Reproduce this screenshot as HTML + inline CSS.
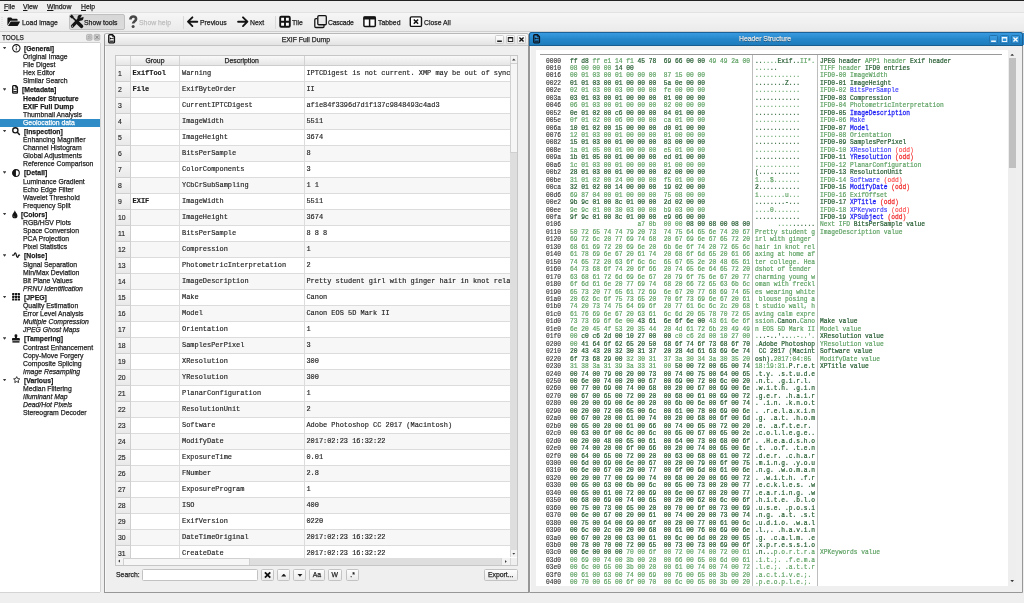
<!DOCTYPE html>
<html><head><meta charset="utf-8"><title>Sherloq</title>
<style>
*{box-sizing:border-box;margin:0;padding:0}
html,body{width:1024px;height:603px;overflow:hidden;background:#efefef;font-family:"Liberation Sans",sans-serif;font-size:7.9px;color:#1a1a1a;-webkit-text-stroke:.25px}
body{position:relative;will-change:transform}
.abs{position:absolute}
#topline{position:absolute;left:0;top:0;width:1024px;height:1px;background:#222}
#menubar{position:absolute;left:0;top:1px;width:1024px;height:11px;background:#efefef}
#menubar span{position:absolute;top:1.2px;line-height:9px;white-space:pre;transform:scaleX(.868);transform-origin:0 50%}
#menubar u{text-decoration-thickness:.55px;text-underline-offset:.7px}
#toolbar{position:absolute;left:0;top:12px;width:1024px;height:19.6px;background:linear-gradient(#f6f6f6,#ebebeb);border-top:1px solid #e2e2e2;border-bottom:1px solid #cfcfcf}
.tb{position:absolute;top:0;height:19px;line-height:19.4px;white-space:pre;transform:scaleX(.868);transform-origin:0 50%}
.tbi{position:absolute}
.tbi svg{display:block;width:100%;height:100%}
#showtools{position:absolute;left:68.6px;top:.9px;width:56.6px;height:15.7px;border:1px solid #c0c0c0;border-radius:2px;background:linear-gradient(#d7d7d7,#dcdcdc)}
.sep{position:absolute;top:3px;width:1px;height:13px;background:#dadada;border-right:0}
.t{display:inline-block;transform:scaleX(.868);transform-origin:0 50%}
.tcn{display:inline-block;transform:scaleX(.868);transform-origin:50% 50%}
/* dock */
#dock{position:absolute;left:0;top:32px;width:101px;height:571px;background:#efefef}
#docktitle{transform:scaleX(.82);transform-origin:0 50%;position:absolute;left:1.5px;top:1.2px;line-height:10px;font-size:7.9px;color:#222}
#tree{position:absolute;left:0;top:11px;width:100.3px;height:549px;background:#fff;box-shadow:0 -1px 0 #cfcfcf,1px 0 0 #d4d4d4,0 1px 0 #d4d4d4;overflow:hidden}
.tic{position:absolute;display:block;overflow:visible}
svg{overflow:visible}
.tg,.tc{position:absolute;left:0;width:100px;white-space:pre}
.tg{height:9.5px;line-height:9.5px;font-weight:bold}
.tc{height:8px;line-height:8px}
.tc span{position:absolute;left:22.6px;top:0;transform:scaleX(.868);transform-origin:0 50%}
.tg .tt{position:absolute;top:0;transform:scaleX(.868);transform-origin:0 50%}
.tg .ti{position:absolute;left:11.6px;top:0.4px;width:8.6px;height:8.6px}
.tg .ti svg{display:block;width:100%;height:100%}
.tg .arr{position:absolute;left:2.7px;top:3.2px;width:3.8px;height:2.4px;background:#3a3a3a;clip-path:polygon(0 0,100% 0,50% 100%)}
.bd{font-weight:bold}.it{font-style:italic}
.sel{background:#308cc6;color:#fff}
/* mdi windows */
.win{position:absolute;top:33px;height:560px;background:#efefef;border:1px solid #979797;border-top-color:#b8b8b8;border-radius:2.5px 2.5px 0 0;box-shadow:inset 1px 0 0 #f8f8f8}
.wt{position:absolute;left:0;top:0;right:0;height:12px;padding-left:13px;padding-right:34px;text-align:center;line-height:11.6px;font-size:7.9px;white-space:pre}
#w1{left:104px;width:425px}
#w1 .wt{background:linear-gradient(#fafafa,#e3e3e3);border-bottom:1px solid #c4c4c4;color:#222;border-radius:2px 2px 0 0}
#w2{left:529px;width:494px;top:32px;height:561px;border-color:#979797}
#w2 .wt{left:-1px;right:-1px;top:-1px;height:14px;line-height:12.600px;padding-left:14px;padding-right:35px;background:linear-gradient(#3a9be0,#2385c8 55%,#1f7cbc);border:1px solid #1b6298;border-bottom-color:#195c8e;color:#e4e4e4;border-radius:2.5px 2.5px 0 0;text-shadow:0 .6px .5px #0f3f63}
.wb{position:absolute;top:1px;width:9px;height:9px;border-radius:1.5px}
#w1 .wb{border:1px solid #cdcdcd;background:linear-gradient(#fefefe,#ececec)}
#w2 .wb{top:2px;border:1px solid #2273ad;background:linear-gradient(#3c9de2,#2b88ca)}
.wb svg{position:absolute;left:-1px;top:-1px;width:9px;height:9px}
.wicon{position:absolute;left:3.1px;top:.1px;width:7.2px;height:9.6px}
#w2 .wicon{top:1.1px}
.wicon svg{display:block;width:100%;height:100%}
/* table */
#tbl{position:absolute;left:10px;top:21px;width:403px;height:511px;background:#fff;border:1px solid #c6c6c6;overflow:hidden}
#thead{position:absolute;left:0;top:0;width:394px;height:10px;background:linear-gradient(#f9f9f9,#e6e6e6);border-bottom:1px solid #cdcdcd}
#thead div{position:absolute;top:0;height:9px;line-height:9.6px;text-align:center;border-right:1px solid #d2d2d2;font-size:7.9px}
.tr{position:absolute;left:0;width:394px;height:16px;border-bottom:1px solid #dcdcdc;background:#fff;font-family:"Liberation Mono",monospace;font-size:6.95px;line-height:15px;white-space:pre;-webkit-text-stroke:.16px;color:#1e1e1e}
.tr.alt{background:#f7f7f7}
.tr div{position:absolute;top:0;height:15px;overflow:hidden}
.rn{left:0;width:15px;background:linear-gradient(#f7f7f7,#e9e9e9);border-right:1px solid #cfcfcf;font-family:"Liberation Sans",sans-serif;font-size:7.9px;padding-left:2.2px;line-height:16.4px!important;height:16px!important;border-bottom:1px solid #cfcfcf}
.c1{left:15px;width:49px;border-right:1px solid #dcdcdc;padding-left:1.6px;font-weight:bold}
.c2{left:64px;width:125px;border-right:1px solid #dcdcdc;padding-left:2px}
.c3{left:189px;width:205px;padding-left:1.4px}
#vsb{position:absolute;left:394px;top:0;width:7px;height:501px;background:#dedede}
#hsb{position:absolute;left:0;top:501.5px;width:401px;height:8px;background:#dedede}
.btn{position:absolute;border:1px solid #c3c3c3;border-radius:1.6px;background:linear-gradient(#fdfdfd,#ebebeb);text-align:center;white-space:pre}
.ar{background:#3c3c3c}
/* hex */
#hex{position:absolute;left:6px;top:17px;width:472px;height:536px;background:#fff;overflow:hidden;font-family:"Liberation Mono",monospace;font-size:7.5px}
#hexhr{position:absolute;left:4px;top:4px;width:462px;height:1px;background:#9a9a9a}
#hexrows{position:absolute;left:0;top:7.5px;width:472px}
.hr{position:relative;height:7.46px;line-height:7.46px;white-space:pre}
.hr>span{position:absolute;top:0;transform:scaleX(.8333);transform-origin:0 0}
.ad{left:10.2px;color:#333;-webkit-text-stroke:.15px #333}
.hx{left:33.8px}.as{left:218.9px}.lb{left:283.8px}
.d{color:#225a2e;-webkit-text-stroke:.22px #225a2e}.l{color:#5fa264;-webkit-text-stroke:.22px #5fa264}
.hr .ul{color:#4848ff;-webkit-text-stroke:.22px #4848ff}.hr .ud{color:#1c1cf4;-webkit-text-stroke:.27px #1c1cf4}
.hr .rl{color:#ff5252;-webkit-text-stroke:.22px #ff5252}.hr .rd{color:#f03030;-webkit-text-stroke:.27px #f03030}
#vl1,#vl2{position:absolute;top:5px;width:1px;height:531px;background:#bdbdbd}
#vl1{left:216px}#vl2{left:281px}
#hvsb{position:absolute;left:478px;top:17px;width:8px;height:536px;background:#eeeeee}
</style></head>
<body>
<div id="topline"></div>
<div id="menubar">
<span style="left:4.1px"><u>F</u>ile</span><span style="left:23.4px"><u>V</u>iew</span><span style="left:47px"><u>W</u>indow</span><span style="left:81px"><u>H</u>elp</span>
</div>
<div id="toolbar">
  <div style="position:absolute;left:3.6px;top:3px;width:2.4px;height:13px;background:repeating-linear-gradient(#f2f2f2 0 1px,#e3e3e3 1px 2px);left:1px"></div>
  <div id="showtools"></div>
  <svg style="position:absolute;left:0;top:-1px;width:470px;height:20px;display:block" viewBox="0 12 470 20">
    <!-- folder-open -->
    <path d="M7.400 18.500a.9.900 0 0 1 .9-.9h2.900l1.200 1.200h4.300a.9.900 0 0 1 .9.900v1.100H10.400L7.400 25.600z" fill="#141414"/>
    <path d="M10.800 21.500h8.800a.4.400 0 0 1 .35.600l-2.200 3.600a.9.900 0 0 1-.75.400H8z" fill="#141414"/>
    <!-- tools -->
    <g stroke="#141414" fill="none">
      <path d="M71.100 15.900l5.600 5.600" stroke-width="1.700"/>
      <path d="M70.700 15.500l2 2" stroke-width="2.800"/>
      <path d="M78.100 22.900l3.400 3.400" stroke-width="3.600" stroke-linecap="round"/>
      <path d="M79.600 18.600l-7.200 7.500" stroke-width="3.100" stroke-linecap="round"/>
    </g>
    <circle cx="80.500" cy="17.700" r="3" fill="#141414"/>
    <path d="M80.300 17.900l2.300-4.200 2.600 2.600z" fill="#d9d9d9"/>
    <circle cx="72.300" cy="26.200" r=".6" fill="#d9d9d9"/>
    <!-- question -->
    <path d="M130.400 19.400c0-2.100 1.400-2.900 2.800-2.900 1.600 0 2.900 1 2.900 2.500 0 2.200-3 2.300-3 4.600" fill="none" stroke="#484848" stroke-width="2.600"/>
    <circle cx="133.100" cy="26.600" r="1.500" fill="#484848"/>
    <!-- arrows -->
    <path d="M192.400 17.300L188 21.700l4.400 4.400M188.400 21.700h8.900" fill="none" stroke="#141414" stroke-width="1.900" stroke-linecap="round" stroke-linejoin="round"/>
    <path d="M243 17.300l4.400 4.400-4.400 4.400M247 21.700h-8.900" fill="none" stroke="#141414" stroke-width="1.900" stroke-linecap="round" stroke-linejoin="round"/>
    <!-- tile -->
    <rect x="280.200" y="16.800" width="9.600" height="9.900" rx=".9" fill="#fff" stroke="#141414" stroke-width="1.900"/>
    <path d="M285 16.700v10.100M280.100 21.750h9.800" stroke="#141414" stroke-width="1.900"/>
    <!-- cascade -->
    <rect x="314.800" y="18.600" width="9.200" height="8.900" rx="1.100" fill="#f4f4f4" stroke="#141414" stroke-width="1.300"/>
    <rect x="317.400" y="15.100" width="9.600" height="9.700" rx="1.100" fill="#fff"/>
    <rect x="317.800" y="15.650" width="8.500" height="9.100" rx="1.100" fill="#ececec" stroke="#141414" stroke-width="1.300"/>
    <!-- tabbed -->
    <rect x="363.900" y="16.900" width="11.400" height="9.500" rx="1" fill="#fff" stroke="#141414" stroke-width="1.500"/>
    <path d="M363.600 18h12" stroke="#141414" stroke-width="3"/>
    <path d="M369.600 17v9.400" stroke="#141414" stroke-width="1.500"/>
    <!-- close all -->
    <rect x="410.300" y="16.900" width="11.200" height="9.500" rx="1.200" fill="#fff" stroke="#141414" stroke-width="1.400"/>
    <path d="M413.800 19.500l4.300 4.300M418.100 19.500l-4.300 4.300" stroke="#141414" stroke-width="1.600"/>
  </svg>
  <!-- load image -->
  <div class="tb" style="left:21.5px">Load image</div>
  <!-- show tools -->
  <div class="tb" style="left:84.2px">Show tools</div>
  <!-- help -->
  <div class="tb" style="left:139px;color:#bdbdbd">Show help</div>
  <div class="sep" style="left:183px"></div>
  <div class="tb" style="left:199.8px">Previous</div>
  <div class="tb" style="left:250px">Next</div>
  <div class="sep" style="left:275px"></div>
  <div class="tb" style="left:292.2px">Tile</div>
  <div class="tb" style="left:328.4px;letter-spacing:-.22px">Cascade</div>
  <div class="tb" style="left:377.8px">Tabbed</div>
  <div class="tb" style="left:424.2px">Close All</div>
</div>

<div id="dock">
  <div id="docktitle">TOOLS</div>
  <svg class="abs" style="left:86px;top:2px;width:15px;height:7px;display:block" viewBox="86 34 15 7"><rect x="86.600" y="34.400" width="5.400" height="5.800" rx="1" fill="#cfcfcf" stroke="#ababab" stroke-width=".8"/><path d="M87.800 39l3-3.400M87.800 37.200l1.600-1.800M89.600 39l1.400-1.600" stroke="#8f8f8f" stroke-width=".7"/><rect x="94.200" y="34.400" width="5.600" height="5.800" rx="1" fill="#cfcfcf" stroke="#ababab" stroke-width=".8"/><path d="M95.400 35.600l3.200 3.400M98.600 35.600l-3.200 3.400" stroke="#7d7d7d" stroke-width=".9"/></svg>
  <div id="tree">
<div class="tg" style="top:0.60px"><span class="arr"></span><span class="tt" style="left:23.8px">[General]</span></div>
<svg class="tic" style="left:11.90px;top:0.50px;width:8.70px;height:8.70px" viewBox="0 0 18 18" preserveAspectRatio="none"><circle cx="9" cy="9" r="7.7" fill="#fff" stroke="#151515" stroke-width="2.1"/><rect x="7.9" y="7.6" width="2.2" height="5.6" fill="#444"/><circle cx="9" cy="5" r="1.35" fill="#444"/></svg>
<div class="tc" style="top:10.10px"><span>Original Image</span></div>
<div class="tc" style="top:18.10px"><span>File Digest</span></div>
<div class="tc" style="top:26.10px"><span>Hex Editor</span></div>
<div class="tc" style="top:34.10px"><span>Similar Search</span></div>
<div class="tg" style="top:42.10px"><span class="arr"></span><span class="tt" style="left:21.9px">[Metadata]</span></div>
<svg class="tic" style="left:11.90px;top:42.10px;width:6.10px;height:8.80px" viewBox="0 0 12.2 17.6" preserveAspectRatio="none"><path d="M1.400 2.600a1.200 1.200 0 0 1 1.200-1.200h5.200l3 3v10.600a1.200 1.200 0 0 1-1.200 1.200H2.600a1.200 1.200 0 0 1-1.200-1.200z" fill="#fff" stroke="#151515" stroke-width="2.600" stroke-linejoin="round"/><path d="M3 6.300l3.400 2.100L3 10.500z" fill="#151515"/><path d="M5.500 8.400h4.500" stroke="#151515" stroke-width="1.700"/><path d="M2.600 13.200h7" stroke="#151515" stroke-width="2.200"/><path d="M7.200 1.400v3.800h3.600" fill="none" stroke="#151515" stroke-width="1.500"/></svg>
<div class="tc bd" style="top:51.60px"><span>Header Structure</span></div>
<div class="tc bd" style="top:59.60px"><span>EXIF Full Dump</span></div>
<div class="tc" style="top:67.60px"><span>Thumbnail Analysis</span></div>
<div class="tc sel" style="top:75.60px"><span>Geolocation data</span></div>
<div class="tg" style="top:83.60px"><span class="arr"></span><span class="tt" style="left:23.8px">[Inspection]</span></div>
<svg class="tic" style="left:11.90px;top:83.90px;width:8.10px;height:8.20px" viewBox="0 0 16.2 16.4" preserveAspectRatio="none"><circle cx="6.700" cy="6.700" r="5.200" fill="none" stroke="#151515" stroke-width="2.700"/><path d="M10.600 10.700l4.200 4.200" stroke="#151515" stroke-width="3" stroke-linecap="round"/></svg>
<div class="tc" style="top:93.10px"><span>Enhancing Magnifier</span></div>
<div class="tc" style="top:101.10px"><span>Channel Histogram</span></div>
<div class="tc" style="top:109.10px"><span>Global Adjustments</span></div>
<div class="tc" style="top:117.10px"><span>Reference Comparison</span></div>
<div class="tg" style="top:125.10px"><span class="arr"></span><span class="tt" style="left:23.8px">[Detail]</span></div>
<svg class="tic" style="left:12.10px;top:125.50px;width:7.90px;height:8.10px" viewBox="0 0 16 16" preserveAspectRatio="none"><circle cx="8" cy="8" r="6.800" fill="#fff" stroke="#151515" stroke-width="2.200"/><path d="M8 1.200a6.800 6.800 0 0 0 0 13.600z" fill="#151515"/></svg>
<div class="tc" style="top:134.60px"><span>Luminance Gradient</span></div>
<div class="tc" style="top:142.60px"><span>Echo Edge Filter</span></div>
<div class="tc" style="top:150.60px"><span>Wavelet Threshold</span></div>
<div class="tc" style="top:158.60px"><span>Frequency Split</span></div>
<div class="tg" style="top:166.60px"><span class="arr"></span><span class="tt" style="left:21.0px">[Colors]</span></div>
<svg class="tic" style="left:11.90px;top:167.10px;width:5.70px;height:8.50px" viewBox="0 0 11.4 17" preserveAspectRatio="none"><path d="M5.700 .3C6.600 4.200 11 7.200 11 11.300a5.300 5.300 0 0 1-10.600 0C.4 7.200 4.800 4.200 5.700 .3z" fill="#151515"/><path d="M3 11.500a2.700 2.700 0 0 0 2.500 2.700" fill="none" stroke="#999" stroke-width="1"/></svg>
<div class="tc" style="top:176.10px"><span>RGB/HSV Plots</span></div>
<div class="tc" style="top:184.10px"><span>Space Conversion</span></div>
<div class="tc" style="top:192.10px"><span>PCA Projection</span></div>
<div class="tc" style="top:200.10px"><span>Pixel Statistics</span></div>
<div class="tg" style="top:208.10px"><span class="arr"></span><span class="tt" style="left:23.8px">[Noise]</span></div>
<svg class="tic" style="left:12.20px;top:209.10px;width:8.10px;height:6.20px" viewBox="0 0 16.2 12.4" preserveAspectRatio="none"><path d="M1.200 6.400h2c1.800 0 1.200-4.800 3.400-4.800 2.700 0 1.500 9.400 4.200 9.400 2 0 1.400-4.600 3-4.600h1.400" fill="none" stroke="#151515" stroke-width="2.500" stroke-linecap="round" stroke-linejoin="round"/></svg>
<div class="tc" style="top:217.60px"><span>Signal Separation</span></div>
<div class="tc" style="top:225.60px"><span>Min/Max Deviation</span></div>
<div class="tc" style="top:233.60px"><span>Bit Plane Values</span></div>
<div class="tc it" style="top:241.60px"><span>PRNU Identification</span></div>
<div class="tg" style="top:249.60px"><span class="arr"></span><span class="tt" style="left:23.8px">[JPEG]</span></div>
<svg class="tic" style="left:11.90px;top:250.10px;width:8.10px;height:7.80px" viewBox="0 0 16.2 15.600" preserveAspectRatio="none"><rect x="0.2" y="0.2" width="4.5" height="4.200" rx=".7" fill="#151515"/><rect x="5.9" y="0.2" width="4.5" height="4.200" rx=".7" fill="#151515"/><rect x="11.5" y="0.2" width="4.5" height="4.200" rx=".7" fill="#151515"/><rect x="0.2" y="5.6" width="4.5" height="4.200" rx=".7" fill="#151515"/><rect x="5.9" y="5.6" width="4.5" height="4.200" rx=".7" fill="#151515"/><rect x="11.5" y="5.6" width="4.5" height="4.200" rx=".7" fill="#151515"/><rect x="0.2" y="11.0" width="4.5" height="4.200" rx=".7" fill="#151515"/><rect x="5.9" y="11.0" width="4.5" height="4.200" rx=".7" fill="#151515"/><rect x="11.5" y="11.0" width="4.5" height="4.200" rx=".7" fill="#151515"/></svg>
<div class="tc" style="top:259.10px"><span>Quality Estimation</span></div>
<div class="tc" style="top:267.10px"><span>Error Level Analysis</span></div>
<div class="tc it" style="top:275.10px"><span>Multiple Compression</span></div>
<div class="tc it" style="top:283.10px"><span>JPEG Ghost Maps</span></div>
<div class="tg" style="top:291.10px"><span class="arr"></span><span class="tt" style="left:23.8px">[Tampering]</span></div>
<svg class="tic" style="left:12.00px;top:291.10px;width:7.90px;height:8.80px" viewBox="0 0 15.800 17.600" preserveAspectRatio="none"><path d="M5 3.300a2.900 2.900 0 1 1 5.800 0c0 1.500-1 2.200-1 4v.9h4.400a1.600 1.600 0 0 1 1.600 1.600v3H0v-3a1.600 1.600 0 0 1 1.600-1.600H6v-.9c0-1.800-1-2.500-1-4z" fill="#151515"/><rect x=".8" y="14.300" width="14.200" height="2.900" fill="#151515"/></svg>
<div class="tc" style="top:300.60px"><span>Contrast Enhancement</span></div>
<div class="tc" style="top:308.60px"><span>Copy-Move Forgery</span></div>
<div class="tc" style="top:316.60px"><span>Composite Splicing</span></div>
<div class="tc it" style="top:324.60px"><span>Image Resampling</span></div>
<div class="tg" style="top:332.60px"><span class="arr"></span><span class="tt" style="left:23.8px">[Various]</span></div>
<svg class="tic" style="left:12.50px;top:333.00px;width:7.40px;height:7.20px" viewBox="0 0 14.800 14.400" preserveAspectRatio="none"><path d="M7.400 1.300l1.900 3.900 4.300.6-3.100 3 .75 4.300L7.400 11.100l-3.850 2 .75-4.300-3.100-3 4.300-.6z" fill="none" stroke="#151515" stroke-width="1.700" stroke-linejoin="round"/></svg>
<div class="tc" style="top:342.10px"><span>Median Filtering</span></div>
<div class="tc it" style="top:350.10px"><span>Illuminant Map</span></div>
<div class="tc it" style="top:358.10px"><span>Dead/Hot Pixels</span></div>
<div class="tc" style="top:366.10px"><span>Stereogram Decoder</span></div>
  </div>
</div>

<!-- EXIF Full Dump -->
<div class="win" id="w1">
  <div class="wt"><span class="tcn">EXIF Full Dump</span></div>
  <div class="wicon"><svg viewBox="0 0 14.2 19" preserveAspectRatio="none"><path d="M1.500 3a1.500 1.500 0 0 1 1.500-1.500h6l3.700 3.700V16a1.500 1.500 0 0 1-1.500 1.500H3a1.500 1.500 0 0 1-1.500-1.500z" fill="#fff" stroke="#111" stroke-width="2.700" stroke-linejoin="round"/><path d="M3.600 6.600l3.800 2.500-3.800 2.500z" fill="#111"/><path d="M6.500 9.100h4.600" stroke="#111" stroke-width="1.800"/><path d="M3.200 14.200h7.800" stroke="#111" stroke-width="2.400"/><path d="M8.600 1.500v4h4" fill="none" stroke="#111" stroke-width="1.600"/></svg></div>
  <div class="wb" style="left:390px"><svg viewBox="0 0 10 10"><path d="M2.400 6.900h5.200" stroke="#111" stroke-width="1.600"/></svg></div>
  <div class="wb" style="left:401px"><svg viewBox="0 0 10 10"><rect x="2.500" y="2.900" width="5" height="4.300" fill="none" stroke="#111" stroke-width="1"/><path d="M2.500 3.100h5" stroke="#111" stroke-width="1.400"/></svg></div>
  <div class="wb" style="left:412px"><svg viewBox="0 0 10 10"><path d="M2.700 2.700l4.600 4.600M7.300 2.700l-4.600 4.600" stroke="#111" stroke-width="1.500"/></svg></div>
  <div id="tbl">
    <div id="thead"><div style="left:0;width:15px"></div><div style="left:15px;width:49px"><span class="tcn">Group</span></div><div style="left:64px;width:125px"><span class="tcn">Description</span></div><div style="left:189px;width:205px;border-right:0"></div></div>
<div class="tr " style="top:10.00px"><div class="rn"><span class="t">1</span></div><div class="c1">ExifTool</div><div class="c2">Warning</div><div class="c3">IPTCDigest is not current. XMP may be out of sync</div></div>
<div class="tr alt" style="top:26.00px"><div class="rn"><span class="t">2</span></div><div class="c1">File</div><div class="c2">ExifByteOrder</div><div class="c3">II</div></div>
<div class="tr " style="top:42.00px"><div class="rn"><span class="t">3</span></div><div class="c1"></div><div class="c2">CurrentIPTCDigest</div><div class="c3">af1e84f3396d7d1f137c9848493c4ad3</div></div>
<div class="tr alt" style="top:58.00px"><div class="rn"><span class="t">4</span></div><div class="c1"></div><div class="c2">ImageWidth</div><div class="c3">5511</div></div>
<div class="tr " style="top:74.00px"><div class="rn"><span class="t">5</span></div><div class="c1"></div><div class="c2">ImageHeight</div><div class="c3">3674</div></div>
<div class="tr alt" style="top:90.00px"><div class="rn"><span class="t">6</span></div><div class="c1"></div><div class="c2">BitsPerSample</div><div class="c3">8</div></div>
<div class="tr " style="top:106.00px"><div class="rn"><span class="t">7</span></div><div class="c1"></div><div class="c2">ColorComponents</div><div class="c3">3</div></div>
<div class="tr alt" style="top:122.00px"><div class="rn"><span class="t">8</span></div><div class="c1"></div><div class="c2">YCbCrSubSampling</div><div class="c3">1 1</div></div>
<div class="tr " style="top:138.00px"><div class="rn"><span class="t">9</span></div><div class="c1">EXIF</div><div class="c2">ImageWidth</div><div class="c3">5511</div></div>
<div class="tr alt" style="top:154.00px"><div class="rn"><span class="t">10</span></div><div class="c1"></div><div class="c2">ImageHeight</div><div class="c3">3674</div></div>
<div class="tr " style="top:170.00px"><div class="rn"><span class="t">11</span></div><div class="c1"></div><div class="c2">BitsPerSample</div><div class="c3">8 8 8</div></div>
<div class="tr alt" style="top:186.00px"><div class="rn"><span class="t">12</span></div><div class="c1"></div><div class="c2">Compression</div><div class="c3">1</div></div>
<div class="tr " style="top:202.00px"><div class="rn"><span class="t">13</span></div><div class="c1"></div><div class="c2">PhotometricInterpretation</div><div class="c3">2</div></div>
<div class="tr alt" style="top:218.00px"><div class="rn"><span class="t">14</span></div><div class="c1"></div><div class="c2">ImageDescription</div><div class="c3">Pretty student girl with ginger hair in knot relaxing at home after college. Headshot of tender charming young woman with freckles wearing white blouse posing at studio wall, having calm expression</div></div>
<div class="tr " style="top:234.00px"><div class="rn"><span class="t">15</span></div><div class="c1"></div><div class="c2">Make</div><div class="c3">Canon</div></div>
<div class="tr alt" style="top:250.00px"><div class="rn"><span class="t">16</span></div><div class="c1"></div><div class="c2">Model</div><div class="c3">Canon EOS 5D Mark II</div></div>
<div class="tr " style="top:266.00px"><div class="rn"><span class="t">17</span></div><div class="c1"></div><div class="c2">Orientation</div><div class="c3">1</div></div>
<div class="tr alt" style="top:282.00px"><div class="rn"><span class="t">18</span></div><div class="c1"></div><div class="c2">SamplesPerPixel</div><div class="c3">3</div></div>
<div class="tr " style="top:298.00px"><div class="rn"><span class="t">19</span></div><div class="c1"></div><div class="c2">XResolution</div><div class="c3">300</div></div>
<div class="tr alt" style="top:314.00px"><div class="rn"><span class="t">20</span></div><div class="c1"></div><div class="c2">YResolution</div><div class="c3">300</div></div>
<div class="tr " style="top:330.00px"><div class="rn"><span class="t">21</span></div><div class="c1"></div><div class="c2">PlanarConfiguration</div><div class="c3">1</div></div>
<div class="tr alt" style="top:346.00px"><div class="rn"><span class="t">22</span></div><div class="c1"></div><div class="c2">ResolutionUnit</div><div class="c3">2</div></div>
<div class="tr " style="top:362.00px"><div class="rn"><span class="t">23</span></div><div class="c1"></div><div class="c2">Software</div><div class="c3">Adobe Photoshop CC 2017 (Macintosh)</div></div>
<div class="tr alt" style="top:378.00px"><div class="rn"><span class="t">24</span></div><div class="c1"></div><div class="c2">ModifyDate</div><div class="c3">2017:02:23 16:32:22</div></div>
<div class="tr " style="top:394.00px"><div class="rn"><span class="t">25</span></div><div class="c1"></div><div class="c2">ExposureTime</div><div class="c3">0.01</div></div>
<div class="tr alt" style="top:410.00px"><div class="rn"><span class="t">26</span></div><div class="c1"></div><div class="c2">FNumber</div><div class="c3">2.8</div></div>
<div class="tr " style="top:426.00px"><div class="rn"><span class="t">27</span></div><div class="c1"></div><div class="c2">ExposureProgram</div><div class="c3">1</div></div>
<div class="tr alt" style="top:442.00px"><div class="rn"><span class="t">28</span></div><div class="c1"></div><div class="c2">ISO</div><div class="c3">400</div></div>
<div class="tr " style="top:458.00px"><div class="rn"><span class="t">29</span></div><div class="c1"></div><div class="c2">ExifVersion</div><div class="c3">0220</div></div>
<div class="tr alt" style="top:474.00px"><div class="rn"><span class="t">30</span></div><div class="c1"></div><div class="c2">DateTimeOriginal</div><div class="c3">2017:02:23 16:32:22</div></div>
<div class="tr " style="top:490.00px"><div class="rn"><span class="t">31</span></div><div class="c1"></div><div class="c2">CreateDate</div><div class="c3">2017:02:23 16:32:22</div></div>
    <div id="vsb">
      <div class="abs" style="left:0;top:0;width:7px;height:7px;background:#f3f3f3;border-left:1px solid #d4d4d4"></div>
      <div class="abs ar" style="left:2px;top:2.4px;width:3.6px;height:2.2px;clip-path:polygon(0 100%,50% 0,100% 100%)"></div>
      <div class="abs" style="left:0;top:7px;width:7px;height:90px;background:#f6f6f6;border:1px solid #d0d0d0;border-right:0"></div>
      <div class="abs" style="left:0;top:494px;width:7px;height:7px;background:#f3f3f3;border-left:1px solid #d4d4d4"></div>
      <div class="abs ar" style="left:2px;top:496.6px;width:3.6px;height:2.2px;clip-path:polygon(0 0,50% 100%,100% 0)"></div>
    </div>
    <div id="hsb">
      <div class="abs" style="left:0;top:0;width:7px;height:7px;background:#f3f3f3"></div>
      <div class="abs ar" style="left:2.2px;top:1.800px;width:2.2px;height:3.6px;clip-path:polygon(100% 0,0 50%,100% 100%)"></div>
      <div class="abs" style="left:7px;top:0;width:127px;height:7px;background:#f6f6f6;border:1px solid #d0d0d0;border-bottom:0"></div>
      <div class="abs" style="left:385px;top:0;width:9px;height:8px;background:#f3f3f3;border-left:1px solid #d6d6d6"></div>
      <div class="abs ar" style="left:388.6px;top:2.200px;width:2.2px;height:3.6px;clip-path:polygon(0 0,100% 50%,0 100%)"></div>
      <div class="abs" style="left:394px;top:0;width:7px;height:8px;background:#efefef;border-left:1px solid #d6d6d6"></div>
    </div>
  </div>
  <div class="abs" style="left:10.6px;top:536px;line-height:10px;font-size:7.9px"><span class="t">Search:</span></div>
  <div class="abs" style="left:37px;top:535px;width:116px;height:12px;background:#fff;border:1px solid #c2c2c2;border-radius:1.5px"></div>
  <div class="btn" style="left:155.6px;top:535px;width:13.2px;height:12px"><svg viewBox="0 0 13.2 12" style="position:absolute;left:-1px;top:-1px;width:13.2px;height:12px"><path d="M3.900 3.300l5.400 5.400M9.300 3.300L3.900 8.700" stroke="#111" stroke-width="1.800"/></svg></div>
  <div class="btn" style="left:172px;top:535px;width:13px;height:12px"><div class="abs" style="left:3.200px;top:3.600px;width:5.200px;height:3px;background:#1c1c1c;clip-path:polygon(0 100%,50% 0,100% 100%)"></div></div>
  <div class="btn" style="left:188.2px;top:535px;width:13px;height:12px"><div class="abs" style="left:3.200px;top:3.800px;width:5.200px;height:3px;background:#1c1c1c;clip-path:polygon(0 0,50% 100%,100% 0)"></div></div>
  <div class="btn" style="left:204px;top:535px;width:16.2px;height:12px;line-height:9.8px;font-size:7.9px"><span class="tcn">Aa</span></div>
  <div class="btn" style="left:223.2px;top:535px;width:14px;height:12px;line-height:9.8px;font-size:7.9px"><span class="tcn">W</span></div>
  <div class="btn" style="left:240.6px;top:535px;width:13.4px;height:12px;line-height:9.8px;font-size:7.9px"><span class="tcn">.*</span></div>
  <div class="btn" style="left:378.6px;top:535px;width:34.4px;height:12px;line-height:9.8px;font-size:7.9px"><span class="tcn">Export...</span></div>
</div>

<!-- Header Structure -->
<div class="win" id="w2">
  <div class="wt"><span class="tcn">Header Structure</span></div>
  <div class="wicon"><svg viewBox="0 0 14.2 19" preserveAspectRatio="none"><path d="M1.500 3a1.500 1.500 0 0 1 1.500-1.500h6l3.700 3.700V16a1.500 1.500 0 0 1-1.500 1.500H3a1.500 1.500 0 0 1-1.500-1.500z" fill="#2e8fd6" stroke="#0b1620" stroke-width="2.700" stroke-linejoin="round"/><path d="M3.600 6.600l3.800 2.500-3.800 2.500z" fill="#0b1620"/><path d="M6.500 9.100h4.600" stroke="#0b1620" stroke-width="1.800"/><path d="M3.200 14.200h7.800" stroke="#0b1620" stroke-width="2.400"/><path d="M8.600 1.500v4h4" fill="none" stroke="#0b1620" stroke-width="1.600"/></svg></div>
  <div class="wb" style="left:459px"><svg viewBox="0 0 10 10"><path d="M2.400 6.900h5.200" stroke="#fff" stroke-width="1.600"/></svg></div>
  <div class="wb" style="left:470px"><svg viewBox="0 0 10 10"><rect x="2.500" y="2.900" width="5" height="4.300" fill="none" stroke="#fff" stroke-width="1"/><path d="M2.500 3.100h5" stroke="#fff" stroke-width="1.400"/></svg></div>
  <div class="wb" style="left:481px"><svg viewBox="0 0 10 10"><path d="M2.700 2.700l4.600 4.600M7.300 2.700l-4.600 4.600" stroke="#fff" stroke-width="1.500"/></svg></div>
  <div id="hex">
    <div id="hexhr"></div>
    <div id="vl1"></div><div id="vl2"></div>
    <div id="hexrows">
<div class="hr"><span class="ad">0000</span><span class="hx"><span class="d">ff d8 </span><span class="l">ff e1 14 f1 </span><span class="d">45 78  69 66 00 00 </span><span class="l">49 49 2a 00</span></span><span class="as"><span class="d">..</span><span class="l">....</span><span class="d">Exif..</span><span class="l">II*.</span></span><span class="lb"><span class="d">JPEG header </span><span class="l">APP1 header </span><span class="d">Exif header</span></span></div>
<div class="hr"><span class="ad">0010</span><span class="hx"><span class="l">08 00 00 00 </span><span class="d">14 00</span></span><span class="as"><span class="l">....</span><span class="d">..</span></span><span class="lb"><span class="l">TIFF header </span><span class="d">IFD0 entries</span></span></div>
<div class="hr"><span class="ad">0016</span><span class="hx"><span class="l">00 01 03 00 01 00 00 00  87 15 00 00</span></span><span class="as"><span class="l">............</span></span><span class="lb"><span class="l">IFD0-00 </span><span class="l">ImageWidth</span></span></div>
<div class="hr"><span class="ad">0022</span><span class="hx"><span class="d">01 01 03 00 01 00 00 00  5a 0e 00 00</span></span><span class="as"><span class="d">........Z...</span></span><span class="lb"><span class="d">IFD0-01 </span><span class="d">ImageHeight</span></span></div>
<div class="hr"><span class="ad">002e</span><span class="hx"><span class="l">02 01 03 00 03 00 00 00  fe 00 00 00</span></span><span class="as"><span class="l">............</span></span><span class="lb"><span class="l">IFD0-02 </span><span class="ul">BitsPerSample</span></span></div>
<div class="hr"><span class="ad">003a</span><span class="hx"><span class="d">03 01 03 00 01 00 00 00  01 00 00 00</span></span><span class="as"><span class="d">............</span></span><span class="lb"><span class="d">IFD0-03 </span><span class="d">Compression</span></span></div>
<div class="hr"><span class="ad">0046</span><span class="hx"><span class="l">06 01 03 00 01 00 00 00  02 00 00 00</span></span><span class="as"><span class="l">............</span></span><span class="lb"><span class="l">IFD0-04 </span><span class="l">PhotometricInterpretation</span></span></div>
<div class="hr"><span class="ad">0052</span><span class="hx"><span class="d">0e 01 02 00 c6 00 00 00  04 01 00 00</span></span><span class="as"><span class="d">............</span></span><span class="lb"><span class="d">IFD0-05 </span><span class="ud">ImageDescription</span></span></div>
<div class="hr"><span class="ad">005e</span><span class="hx"><span class="l">0f 01 02 00 06 00 00 00  ca 01 00 00</span></span><span class="as"><span class="l">............</span></span><span class="lb"><span class="l">IFD0-06 </span><span class="ul">Make</span></span></div>
<div class="hr"><span class="ad">006a</span><span class="hx"><span class="d">10 01 02 00 15 00 00 00  d0 01 00 00</span></span><span class="as"><span class="d">............</span></span><span class="lb"><span class="d">IFD0-07 </span><span class="ud">Model</span></span></div>
<div class="hr"><span class="ad">0076</span><span class="hx"><span class="l">12 01 03 00 01 00 00 00  01 00 00 00</span></span><span class="as"><span class="l">............</span></span><span class="lb"><span class="l">IFD0-08 </span><span class="l">Orientation</span></span></div>
<div class="hr"><span class="ad">0082</span><span class="hx"><span class="d">15 01 03 00 01 00 00 00  03 00 00 00</span></span><span class="as"><span class="d">............</span></span><span class="lb"><span class="d">IFD0-09 </span><span class="d">SamplesPerPixel</span></span></div>
<div class="hr"><span class="ad">008e</span><span class="hx"><span class="l">1a 01 05 00 01 00 00 00  e5 01 00 00</span></span><span class="as"><span class="l">............</span></span><span class="lb"><span class="l">IFD0-10 </span><span class="ul">XResolution</span><span class="rl"> (odd)</span></span></div>
<div class="hr"><span class="ad">009a</span><span class="hx"><span class="d">1b 01 05 00 01 00 00 00  ed 01 00 00</span></span><span class="as"><span class="d">............</span></span><span class="lb"><span class="d">IFD0-11 </span><span class="ud">YResolution</span><span class="rd"> (odd)</span></span></div>
<div class="hr"><span class="ad">00a6</span><span class="hx"><span class="l">1c 01 03 00 01 00 00 00  01 00 00 00</span></span><span class="as"><span class="l">............</span></span><span class="lb"><span class="l">IFD0-12 </span><span class="l">PlanarConfiguration</span></span></div>
<div class="hr"><span class="ad">00b2</span><span class="hx"><span class="d">28 01 03 00 01 00 00 00  02 00 00 00</span></span><span class="as"><span class="d">(...........</span></span><span class="lb"><span class="d">IFD0-13 </span><span class="d">ResolutionUnit</span></span></div>
<div class="hr"><span class="ad">00be</span><span class="hx"><span class="l">31 01 02 00 24 00 00 00  f5 01 00 00</span></span><span class="as"><span class="l">1...$.......</span></span><span class="lb"><span class="l">IFD0-14 </span><span class="ul">Software</span><span class="rl"> (odd)</span></span></div>
<div class="hr"><span class="ad">00ca</span><span class="hx"><span class="d">32 01 02 00 14 00 00 00  19 02 00 00</span></span><span class="as"><span class="d">2...........</span></span><span class="lb"><span class="d">IFD0-15 </span><span class="ud">ModifyDate</span><span class="rd"> (odd)</span></span></div>
<div class="hr"><span class="ad">00d6</span><span class="hx"><span class="l">69 87 04 00 01 00 00 00  75 08 00 00</span></span><span class="as"><span class="l">i.......u...</span></span><span class="lb"><span class="l">IFD0-16 </span><span class="l">ExifOffset</span></span></div>
<div class="hr"><span class="ad">00e2</span><span class="hx"><span class="d">9b 9c 01 00 8c 01 00 00  2d 02 00 00</span></span><span class="as"><span class="d">........-...</span></span><span class="lb"><span class="d">IFD0-17 </span><span class="ud">XPTitle</span><span class="rd"> (odd)</span></span></div>
<div class="hr"><span class="ad">00ee</span><span class="hx"><span class="l">9e 9c 01 00 30 03 00 00  b9 03 00 00</span></span><span class="as"><span class="l">....0.......</span></span><span class="lb"><span class="l">IFD0-18 </span><span class="ul">XPKeywords</span><span class="rl"> (odd)</span></span></div>
<div class="hr"><span class="ad">00fa</span><span class="hx"><span class="d">9f 9c 01 00 8c 01 00 00  e9 06 00 00</span></span><span class="as"><span class="d">............</span></span><span class="lb"><span class="d">IFD0-19 </span><span class="ud">XPSubject</span><span class="rd"> (odd)</span></span></div>
<div class="hr"><span class="ad">0106</span><span class="hx"><span class="l">                  a7 0b  00 00 </span><span class="d">08 00 08 00 08 00</span></span><span class="as"><span class="l">      ....</span><span class="d">......</span></span><span class="lb"><span class="l">Next IFD </span><span class="d">BitsPerSample value</span></span></div>
<div class="hr"><span class="ad">0110</span><span class="hx"><span class="l">50 72 65 74 74 79 20 73  74 75 64 65 6e 74 20 67</span></span><span class="as"><span class="l">Pretty student g</span></span><span class="lb"><span class="l">ImageDescription value</span></span></div>
<div class="hr"><span class="ad">0120</span><span class="hx"><span class="l">69 72 6c 20 77 69 74 68  20 67 69 6e 67 65 72 20</span></span><span class="as"><span class="l">irl with ginger </span></span><span class="lb"></span></div>
<div class="hr"><span class="ad">0130</span><span class="hx"><span class="l">68 61 69 72 20 69 6e 20  6b 6e 6f 74 20 72 65 6c</span></span><span class="as"><span class="l">hair in knot rel</span></span><span class="lb"></span></div>
<div class="hr"><span class="ad">0140</span><span class="hx"><span class="l">61 78 69 6e 67 20 61 74  20 68 6f 6d 65 20 61 66</span></span><span class="as"><span class="l">axing at home af</span></span><span class="lb"></span></div>
<div class="hr"><span class="ad">0150</span><span class="hx"><span class="l">74 65 72 20 63 6f 6c 6c  65 67 65 2e 20 48 65 61</span></span><span class="as"><span class="l">ter college. Hea</span></span><span class="lb"></span></div>
<div class="hr"><span class="ad">0160</span><span class="hx"><span class="l">64 73 68 6f 74 20 6f 66  20 74 65 6e 64 65 72 20</span></span><span class="as"><span class="l">dshot of tender </span></span><span class="lb"></span></div>
<div class="hr"><span class="ad">0170</span><span class="hx"><span class="l">63 68 61 72 6d 69 6e 67  20 79 6f 75 6e 67 20 77</span></span><span class="as"><span class="l">charming young w</span></span><span class="lb"></span></div>
<div class="hr"><span class="ad">0180</span><span class="hx"><span class="l">6f 6d 61 6e 20 77 69 74  68 20 66 72 65 63 6b 6c</span></span><span class="as"><span class="l">oman with freckl</span></span><span class="lb"></span></div>
<div class="hr"><span class="ad">0190</span><span class="hx"><span class="l">65 73 20 77 65 61 72 69  6e 67 20 77 68 69 74 65</span></span><span class="as"><span class="l">es wearing white</span></span><span class="lb"></span></div>
<div class="hr"><span class="ad">01a0</span><span class="hx"><span class="l">20 62 6c 6f 75 73 65 20  70 6f 73 69 6e 67 20 61</span></span><span class="as"><span class="l"> blouse posing a</span></span><span class="lb"></span></div>
<div class="hr"><span class="ad">01b0</span><span class="hx"><span class="l">74 20 73 74 75 64 69 6f  20 77 61 6c 6c 2c 20 68</span></span><span class="as"><span class="l">t studio wall, h</span></span><span class="lb"></span></div>
<div class="hr"><span class="ad">01c0</span><span class="hx"><span class="l">61 76 69 6e 67 20 63 61  6c 6d 20 65 78 70 72 65</span></span><span class="as"><span class="l">aving calm expre</span></span><span class="lb"></span></div>
<div class="hr"><span class="ad">01d0</span><span class="hx"><span class="l">73 73 69 6f 6e 00 </span><span class="d">43 61  6e 6f 6e 00 </span><span class="l">43 61 6e 6f</span></span><span class="as"><span class="l">ssion.</span><span class="d">Canon.</span><span class="l">Cano</span></span><span class="lb"><span class="d">Make value</span></span></div>
<div class="hr"><span class="ad">01e0</span><span class="hx"><span class="l">6e 20 45 4f 53 20 35 44  20 4d 61 72 6b 20 49 49</span></span><span class="as"><span class="l">n EOS 5D Mark II</span></span><span class="lb"><span class="l">Model value</span></span></div>
<div class="hr"><span class="ad">01f0</span><span class="hx"><span class="l">00 </span><span class="d">c0 c6 2d 00 10 27 00  00 </span><span class="l">c0 c6 2d 00 10 27 00</span></span><span class="as"><span class="l">.</span><span class="d">..-..'..</span><span class="l">..-..'.</span></span><span class="lb"><span class="d">XResolution value</span></span></div>
<div class="hr"><span class="ad">0200</span><span class="hx"><span class="l">00 </span><span class="d">41 64 6f 62 65 20 50  68 6f 74 6f 73 68 6f 70</span></span><span class="as"><span class="l">.</span><span class="d">Adobe Photoshop</span></span><span class="lb"><span class="l">YResolution value</span></span></div>
<div class="hr"><span class="ad">0210</span><span class="hx"><span class="d">20 43 43 20 32 30 31 37  20 28 4d 61 63 69 6e 74</span></span><span class="as"><span class="d"> CC 2017 (Macint</span></span><span class="lb"><span class="d">Software value</span></span></div>
<div class="hr"><span class="ad">0220</span><span class="hx"><span class="d">6f 73 68 29 00 </span><span class="l">32 30 31  37 3a 30 34 3a 30 35 20</span></span><span class="as"><span class="d">osh).</span><span class="l">2017:04:05 </span></span><span class="lb"><span class="l">ModifyDate value</span></span></div>
<div class="hr"><span class="ad">0230</span><span class="hx"><span class="l">31 38 3a 31 39 3a 33 31  00 </span><span class="d">50 00 72 00 65 00 74</span></span><span class="as"><span class="l">18:19:31.</span><span class="d">P.r.e.t</span></span><span class="lb"><span class="d">XPTitle value</span></span></div>
<div class="hr"><span class="ad">0240</span><span class="hx"><span class="d">00 74 00 79 00 20 00 73  00 74 00 75 00 64 00 65</span></span><span class="as"><span class="d">.t.y. .s.t.u.d.e</span></span><span class="lb"></span></div>
<div class="hr"><span class="ad">0250</span><span class="hx"><span class="d">00 6e 00 74 00 20 00 67  00 69 00 72 00 6c 00 20</span></span><span class="as"><span class="d">.n.t. .g.i.r.l. </span></span><span class="lb"></span></div>
<div class="hr"><span class="ad">0260</span><span class="hx"><span class="d">00 77 00 69 00 74 00 68  00 20 00 67 00 69 00 6e</span></span><span class="as"><span class="d">.w.i.t.h. .g.i.n</span></span><span class="lb"></span></div>
<div class="hr"><span class="ad">0270</span><span class="hx"><span class="d">00 67 00 65 00 72 00 20  00 68 00 61 00 69 00 72</span></span><span class="as"><span class="d">.g.e.r. .h.a.i.r</span></span><span class="lb"></span></div>
<div class="hr"><span class="ad">0280</span><span class="hx"><span class="d">00 20 00 69 00 6e 00 20  00 6b 00 6e 00 6f 00 74</span></span><span class="as"><span class="d">. .i.n. .k.n.o.t</span></span><span class="lb"></span></div>
<div class="hr"><span class="ad">0290</span><span class="hx"><span class="d">00 20 00 72 00 65 00 6c  00 61 00 78 00 69 00 6e</span></span><span class="as"><span class="d">. .r.e.l.a.x.i.n</span></span><span class="lb"></span></div>
<div class="hr"><span class="ad">02a0</span><span class="hx"><span class="d">00 67 00 20 00 61 00 74  00 20 00 68 00 6f 00 6d</span></span><span class="as"><span class="d">.g. .a.t. .h.o.m</span></span><span class="lb"></span></div>
<div class="hr"><span class="ad">02b0</span><span class="hx"><span class="d">00 65 00 20 00 61 00 66  00 74 00 65 00 72 00 20</span></span><span class="as"><span class="d">.e. .a.f.t.e.r. </span></span><span class="lb"></span></div>
<div class="hr"><span class="ad">02c0</span><span class="hx"><span class="d">00 63 00 6f 00 6c 00 6c  00 65 00 67 00 65 00 2e</span></span><span class="as"><span class="d">.c.o.l.l.e.g.e..</span></span><span class="lb"></span></div>
<div class="hr"><span class="ad">02d0</span><span class="hx"><span class="d">00 20 00 48 00 65 00 61  00 64 00 73 00 68 00 6f</span></span><span class="as"><span class="d">. .H.e.a.d.s.h.o</span></span><span class="lb"></span></div>
<div class="hr"><span class="ad">02e0</span><span class="hx"><span class="d">00 74 00 20 00 6f 00 66  00 20 00 74 00 65 00 6e</span></span><span class="as"><span class="d">.t. .o.f. .t.e.n</span></span><span class="lb"></span></div>
<div class="hr"><span class="ad">02f0</span><span class="hx"><span class="d">00 64 00 65 00 72 00 20  00 63 00 68 00 61 00 72</span></span><span class="as"><span class="d">.d.e.r. .c.h.a.r</span></span><span class="lb"></span></div>
<div class="hr"><span class="ad">0300</span><span class="hx"><span class="d">00 6d 00 69 00 6e 00 67  00 20 00 79 00 6f 00 75</span></span><span class="as"><span class="d">.m.i.n.g. .y.o.u</span></span><span class="lb"></span></div>
<div class="hr"><span class="ad">0310</span><span class="hx"><span class="d">00 6e 00 67 00 20 00 77  00 6f 00 6d 00 61 00 6e</span></span><span class="as"><span class="d">.n.g. .w.o.m.a.n</span></span><span class="lb"></span></div>
<div class="hr"><span class="ad">0320</span><span class="hx"><span class="d">00 20 00 77 00 69 00 74  00 68 00 20 00 66 00 72</span></span><span class="as"><span class="d">. .w.i.t.h. .f.r</span></span><span class="lb"></span></div>
<div class="hr"><span class="ad">0330</span><span class="hx"><span class="d">00 65 00 63 00 6b 00 6c  00 65 00 73 00 20 00 77</span></span><span class="as"><span class="d">.e.c.k.l.e.s. .w</span></span><span class="lb"></span></div>
<div class="hr"><span class="ad">0340</span><span class="hx"><span class="d">00 65 00 61 00 72 00 69  00 6e 00 67 00 20 00 77</span></span><span class="as"><span class="d">.e.a.r.i.n.g. .w</span></span><span class="lb"></span></div>
<div class="hr"><span class="ad">0350</span><span class="hx"><span class="d">00 68 00 69 00 74 00 65  00 20 00 62 00 6c 00 6f</span></span><span class="as"><span class="d">.h.i.t.e. .b.l.o</span></span><span class="lb"></span></div>
<div class="hr"><span class="ad">0360</span><span class="hx"><span class="d">00 75 00 73 00 65 00 20  00 70 00 6f 00 73 00 69</span></span><span class="as"><span class="d">.u.s.e. .p.o.s.i</span></span><span class="lb"></span></div>
<div class="hr"><span class="ad">0370</span><span class="hx"><span class="d">00 6e 00 67 00 20 00 61  00 74 00 20 00 73 00 74</span></span><span class="as"><span class="d">.n.g. .a.t. .s.t</span></span><span class="lb"></span></div>
<div class="hr"><span class="ad">0380</span><span class="hx"><span class="d">00 75 00 64 00 69 00 6f  00 20 00 77 00 61 00 6c</span></span><span class="as"><span class="d">.u.d.i.o. .w.a.l</span></span><span class="lb"></span></div>
<div class="hr"><span class="ad">0390</span><span class="hx"><span class="d">00 6c 00 2c 00 20 00 68  00 61 00 76 00 69 00 6e</span></span><span class="as"><span class="d">.l.,. .h.a.v.i.n</span></span><span class="lb"></span></div>
<div class="hr"><span class="ad">03a0</span><span class="hx"><span class="d">00 67 00 20 00 63 00 61  00 6c 00 6d 00 20 00 65</span></span><span class="as"><span class="d">.g. .c.a.l.m. .e</span></span><span class="lb"></span></div>
<div class="hr"><span class="ad">03b0</span><span class="hx"><span class="d">00 78 00 70 00 72 00 65  00 73 00 73 00 69 00 6f</span></span><span class="as"><span class="d">.x.p.r.e.s.s.i.o</span></span><span class="lb"></span></div>
<div class="hr"><span class="ad">03c0</span><span class="hx"><span class="d">00 6e 00 00 00 </span><span class="l">70 00 6f  00 72 00 74 00 72 00 61</span></span><span class="as"><span class="d">.n...</span><span class="l">p.o.r.t.r.a</span></span><span class="lb"><span class="l">XPKeywords value</span></span></div>
<div class="hr"><span class="ad">03d0</span><span class="hx"><span class="l">00 69 00 74 00 3b 00 20  00 66 00 65 00 6d 00 61</span></span><span class="as"><span class="l">.i.t.;. .f.e.m.a</span></span><span class="lb"></span></div>
<div class="hr"><span class="ad">03e0</span><span class="hx"><span class="l">00 6c 00 65 00 3b 00 20  00 61 00 74 00 74 00 72</span></span><span class="as"><span class="l">.l.e.;. .a.t.t.r</span></span><span class="lb"></span></div>
<div class="hr"><span class="ad">03f0</span><span class="hx"><span class="l">00 61 00 63 00 74 00 69  00 76 00 65 00 3b 00 20</span></span><span class="as"><span class="l">.a.c.t.i.v.e.;. </span></span><span class="lb"></span></div>
<div class="hr"><span class="ad">0400</span><span class="hx"><span class="l">00 70 00 65 00 6f 00 70  00 6c 00 65 00 3b 00 20</span></span><span class="as"><span class="l">.p.e.o.p.l.e.;. </span></span><span class="lb"></span></div>
    </div>
  </div>
  <div id="hvsb">
    <div class="abs ar" style="left:2.4px;top:3.600px;width:3.6px;height:2.2px;clip-path:polygon(0 100%,50% 0,100% 100%)"></div>
    <div class="abs" style="left:.5px;top:8.4px;width:7px;height:110px;background:#c0c0c0"></div>
    <div class="abs ar" style="left:2.4px;top:530px;width:3.6px;height:2.2px;clip-path:polygon(0 0,50% 100%,100% 0)"></div>
  </div>
</div>
<div class="abs" style="left:1023px;top:33px;width:1px;height:12px;background:#2a86c8"></div>
</body></html>
